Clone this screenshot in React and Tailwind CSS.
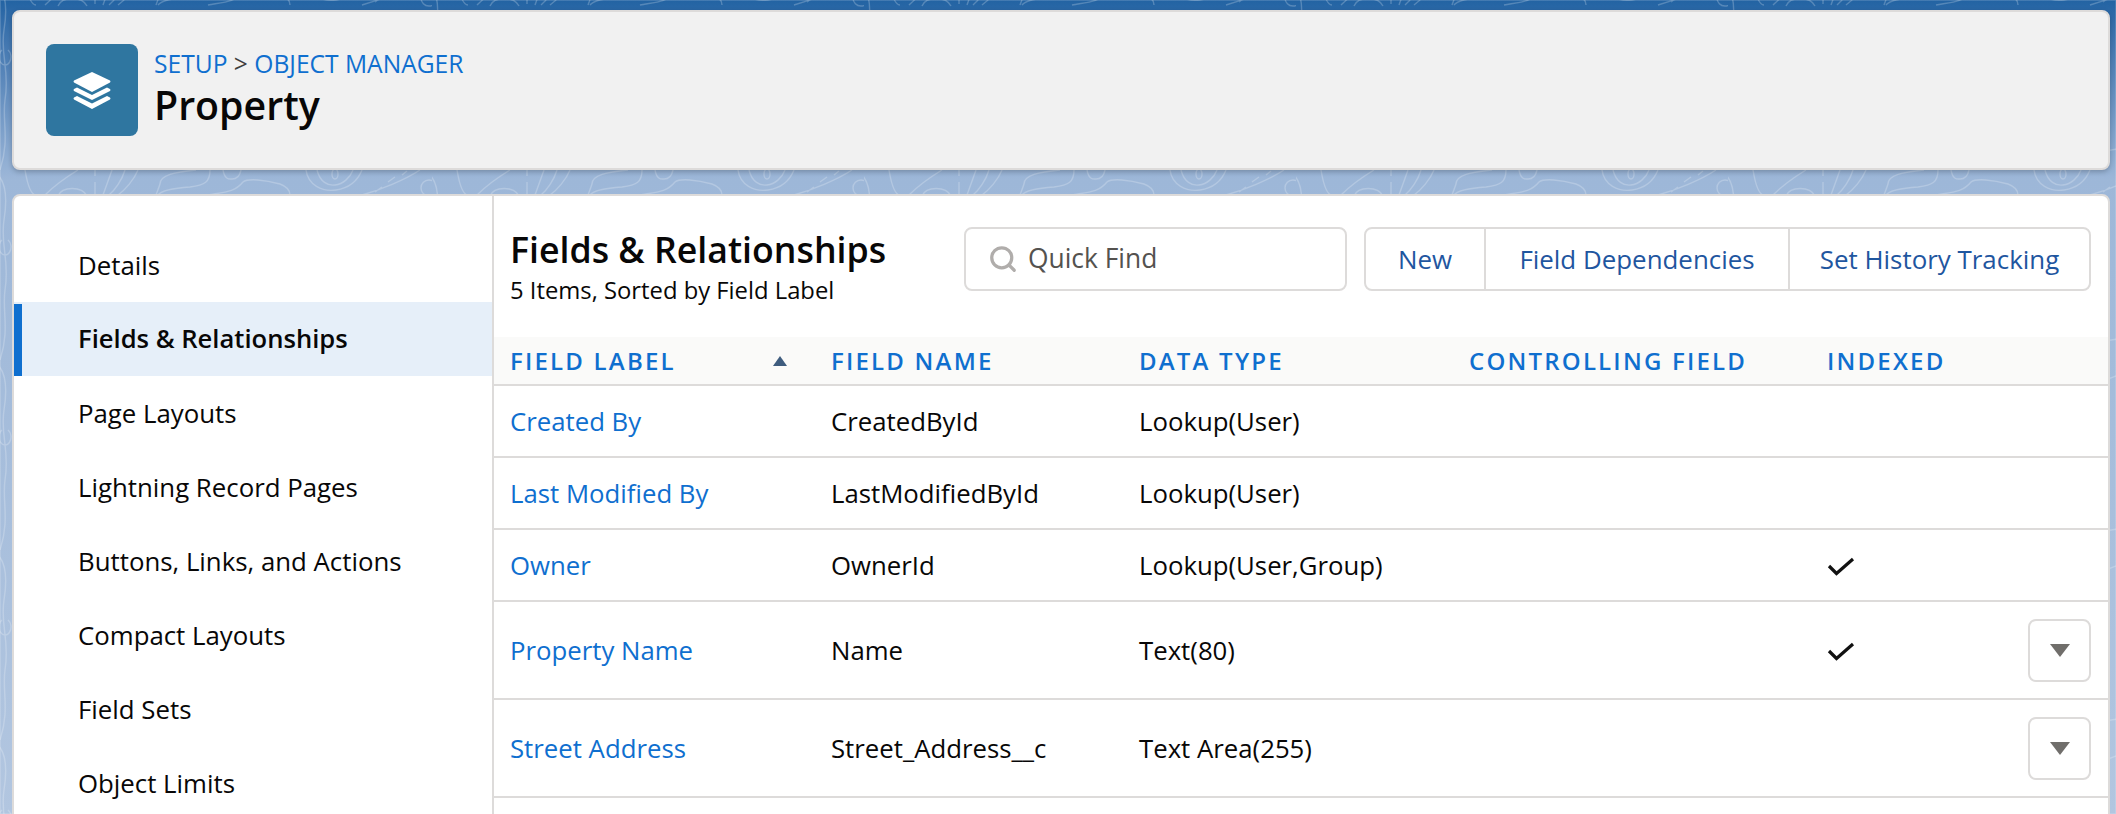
import React from 'react';
import { Search } from 'lucide-react';

const navItems = [
  'Details',
  'Fields & Relationships',
  'Page Layouts',
  'Lightning Record Pages',
  'Buttons, Links, and Actions',
  'Compact Layouts',
  'Field Sets',
  'Object Limits',
];

const rows = [
  { label: 'Created By', name: 'CreatedById', type: 'Lookup(User)', h: 'h-[72px]' },
  { label: 'Last Modified By', name: 'LastModifiedById', type: 'Lookup(User)', h: 'h-[72px]' },
  { label: 'Owner', name: 'OwnerId', type: 'Lookup(User,Group)', indexed: true, h: 'h-[72px]' },
  { label: 'Property Name', name: 'Name', type: 'Text(80)', indexed: true, menu: true, h: 'h-[98px]' },
  { label: 'Street Address', name: 'Street_Address__c', type: 'Text Area(255)', menu: true, h: 'h-[98px]' },
];

function StackIcon() {
  return (
    <svg width="38" height="37" viewBox="0 0 38 37" fill="white">
      <path d="M19 0 37 8.5Q38 9.5 37 10.5L19 20 1 10.5Q0 9.5 1 8.5Z" />
      <path d="M4 15.5 19 23 34 15.5 37 17Q38 18 37 19L19 28 1 19Q0 18 1 17Z" />
      <path d="M4 24 19 31.5 34 24 37 25.5Q38 26.5 37 27.5L19 37 1 27.5Q0 26.5 1 25.5Z" />
    </svg>
  );
}

function Check() {
  return (
    <svg width="28" height="20" viewBox="0 0 28 20" fill="none" stroke="#111" strokeWidth="3.2" className="block mt-[4px]">
      <path d="M2 9 9.5 16.5 26 2" />
    </svg>
  );
}

// topographic lines behind the cards, tile repeats every 432px
function Contours() {
  return (
    <svg className="absolute inset-0 w-full h-full" fill="none" stroke="white" strokeOpacity="0.22" strokeWidth="1.4">
      <defs>
        <pattern id="contour" x="0" y="170" width="432" height="190" patternUnits="userSpaceOnUse">
          <path d="M25 0C27 12 30 25 36 25M45 25C55 15 65 8 78 0M58 26C62 16 82 16 87 26" />
          <path d="M95 0V6M95 12V24M112 0 103 25M125 0C122 10 115 20 109 25M138 0C134 10 125 20 118 25" />
          <path d="M196 0C175 2 160 5 160 14 158 20 157 22 156 25M210 0C210 12 205 15 190 17 175 18 162 20 158 25" />
          <path d="M223 0C225 10 229 9 232 9 237 9 240 5 241 0M208 25C225 22 235 22 243 12 248 8 265 10 280 14 288 17 290 22 290 25" />
          <path d="M306 0C308 15 322 22 336 20 350 18 358 10 362 0M317 0C320 12 328 16 335 15 343 14 350 8 353 0M332 4a3 5 0 1 0 6 0 3 5 0 1 0-6 0" />
          <path d="M362 25C380 20 405 10 420 0M375 22 382 17M388 12 395 7M402 5 407 1M421 18a8 8 0 1 0 16 0 8 8 0 1 0-16 0M442 0" />
          <path d="M-10 0C5 5 8 25 4 50 0 75 10 90 5 120 2 140 10 160 0 190M2 70a6 8 0 1 0 6 0" />
          <path d="M30 150C60 165 90 150 120 160 150 170 180 140 210 165M250 150C270 175 310 160 340 172 360 180 400 160 432 170M70 170C90 190 120 175 140 190" />
        </pattern>
      </defs>
      <rect width="100%" height="100%" fill="url(#contour)" />
    </svg>
  );
}

export default function App() {
  return (
    <div className="relative h-[814px] w-[2116px] overflow-hidden bg-gradient-to-b from-[#2263a3] via-[#9db7d8] via-[22%] to-[#b2c6e0] font-['Open_Sans',sans-serif] text-[#080707]">
      <Contours />
      <div className="relative pl-3 pr-1.5 pt-2.5">
        <div className="flex h-[160px] items-center gap-4 rounded-lg border-2 border-[#dddbda] bg-[#f1f1f1] pl-8 shadow-[0_2px_5px_rgba(0,0,0,0.22)]">
          <div className="flex h-[92px] w-[92px] items-center justify-center rounded-lg bg-[#2f76a0]">
            <StackIcon />
          </div>
          <div>
            <div className="text-[24.6px] leading-[30px] text-[#0f6fcf]">
              SETUP <span className="text-[#3e3e3c]">&gt;</span> OBJECT MANAGER
            </div>
            <div className="text-[39.3px] leading-[52px] font-semibold">Property</div>
          </div>
        </div>

        <div className="mt-6 flex h-[640px] overflow-hidden rounded-lg border-2 border-[#dddbda] bg-white">
          <nav className="w-[480px] shrink-0 border-r-2 border-[#dddbda] pt-[32px]">
            {navItems.map((item) => (
              <div
                key={item}
                className={`flex h-[74px] items-center pl-[64px] ${item === 'Fields & Relationships' ? 'relative bg-[#e6eff9] text-[25.6px] font-semibold' : 'text-[25.8px]'}`}
              >
                {item === 'Fields & Relationships' && <span className="absolute left-0 top-0.5 bottom-0 w-2 bg-[#0f6fcf]" />}
                {item}
              </div>
            ))}
          </nav>

          <main className="min-w-0 flex-1">
            <div className="flex h-[141px] items-start px-4 pt-[31px]">
              <div className="w-[454px] shrink-0">
                <h1 className="text-[35.7px] leading-[44px] font-semibold">Fields &amp; Relationships</h1>
                <p className="mt-px text-[23.8px] leading-[36px]">5 Items, Sorted by Field Label</p>
              </div>
              <div className="flex h-16 w-[383px] items-center gap-[10px] rounded-lg border-2 border-[#dddbda] pl-[22px] text-[26.4px] text-[#54524f]">
                <Search size={30} color="#b0adab" strokeWidth={2.6} />
                Quick Find
              </div>
              <div className="ml-[17px] flex h-16 w-[727px] rounded-lg border-2 border-[#dddbda] text-[25.9px] text-[#1f569f]">
                <div className="flex w-[120px] items-center justify-center border-r-2 border-[#dddbda]">New</div>
                <div className="flex w-[304px] items-center justify-center border-r-2 border-[#dddbda]">Field Dependencies</div>
                <div className="flex flex-1 items-center justify-center">Set History Tracking</div>
              </div>
            </div>

            <table className="w-full table-fixed border-collapse">
              <colgroup>
                <col className="w-[337px]" />
                <col className="w-[308px]" />
                <col className="w-[330px]" />
                <col className="w-[358px]" />
                <col className="w-[184px]" />
                <col />
              </colgroup>
              <thead>
                <tr className="h-12 border-b-2 border-[#dddbda] bg-[#fafaf9] text-left text-[24px] tracking-[2.2px] text-[#0f6fcf]">
                  <th className="relative pl-4 font-semibold">
                    FIELD LABEL
                    <span className="absolute right-[44px] top-[19px] h-0 w-0 border-x-[7px] border-b-[10px] border-x-transparent border-b-[#3e5c7e]" />
                  </th>
                  <th className="font-semibold">FIELD NAME</th>
                  <th className="font-semibold">DATA TYPE</th>
                  <th className="font-semibold">CONTROLLING FIELD</th>
                  <th className="font-semibold">INDEXED</th>
                  <th />
                </tr>
              </thead>
              <tbody className="text-[25.75px]">
                {rows.map((row) => (
                  <tr key={row.label} className={`${row.h} border-b-2 border-[#dddbda]`}>
                    <td className="pl-4 text-[#0f6fcf]">{row.label}</td>
                    <td>{row.name}</td>
                    <td>{row.type}</td>
                    <td />
                    <td>{row.indexed && <Check />}</td>
                    <td>
                      {row.menu && (
                        <div className="ml-auto mr-[17px] flex h-[63px] w-[63px] items-center justify-center rounded-lg border-2 border-[#dddbda]">
                          <span className="h-0 w-0 border-x-[10.5px] border-t-[13px] border-x-transparent border-t-[#706e6b]" />
                        </div>
                      )}
                    </td>
                  </tr>
                ))}
              </tbody>
            </table>
          </main>
        </div>
      </div>
    </div>
  );
}
